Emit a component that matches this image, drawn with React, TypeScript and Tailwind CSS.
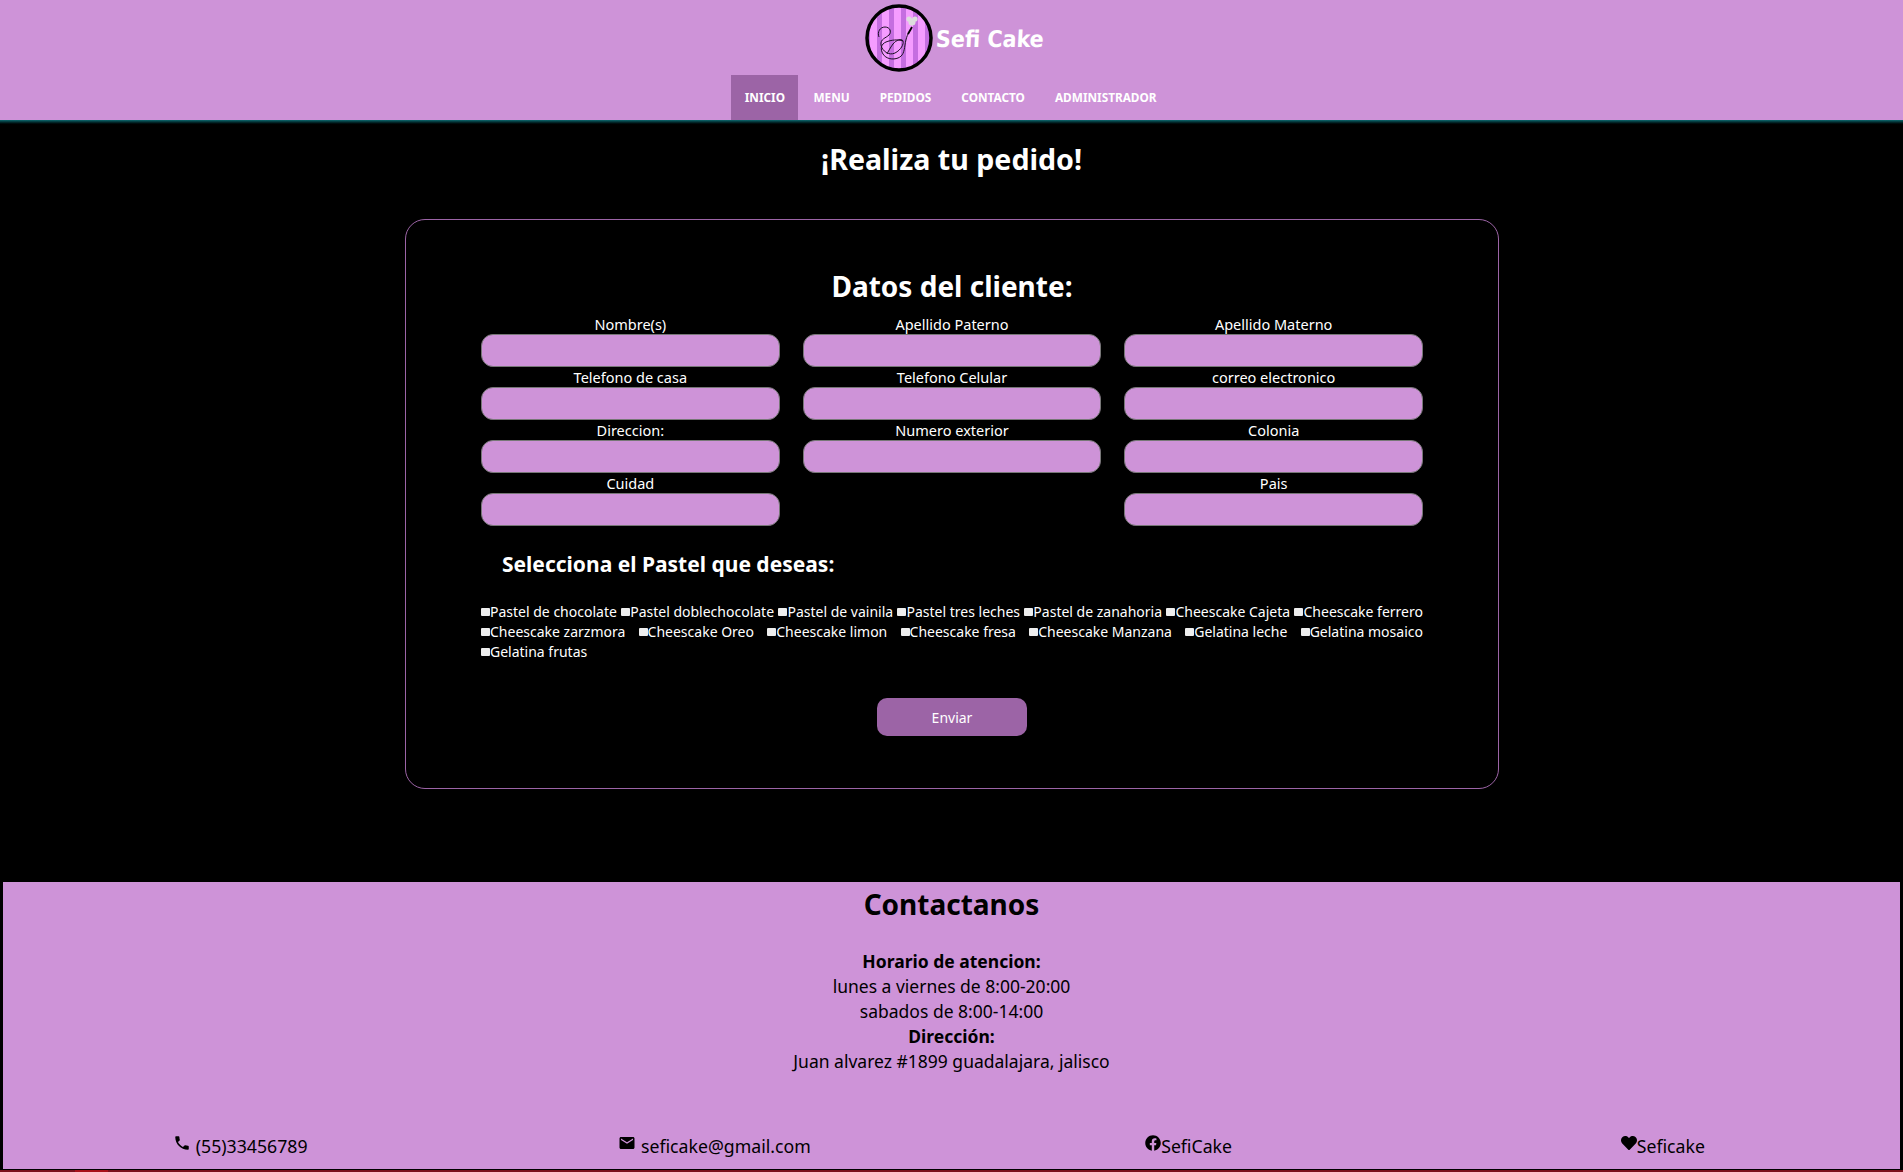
import { FaFacebook, FaHeart } from 'react-icons/fa'
import { MdLocalPhone, MdEmail } from 'react-icons/md'

const NAV = ['INICIO', 'MENU', 'PEDIDOS', 'CONTACTO', 'ADMINISTRADOR']

const FIELDS = [
  ['Nombre(s)', 'Apellido Paterno', 'Apellido Materno'],
  ['Telefono de casa', 'Telefono Celular', 'correo electronico'],
  ['Direccion:', 'Numero exterior', 'Colonia'],
  ['Cuidad', '', 'Pais'],
]

const CAKES = [
  ['Pastel de chocolate', 'Pastel doblechocolate', 'Pastel de vainila', 'Pastel tres leches', 'Pastel de zanahoria', 'Cheescake Cajeta', 'Cheescake ferrero'],
  ['Cheescake zarzmora', 'Cheescake Oreo', 'Cheescake limon', 'Cheescake fresa', 'Cheescake Manzana', 'Gelatina leche', 'Gelatina mosaico'],
  ['Gelatina frutas'],
]

const STRIPES = [6, 18, 30, 42, 54]

function Logo() {
  return (
    <svg width="70" height="70" viewBox="0 0 70 70">
      <defs>
        <clipPath id="disc">
          <circle cx="35" cy="35" r="31" />
        </clipPath>
      </defs>
      <g clipPath="url(#disc)">
        <rect width="70" height="70" fill="#c56ee0" />
        {STRIPES.map((x) => (
          <rect key={x} x={x} width="7" height="70" fill="#f59cff" />
        ))}
      </g>
      <circle cx="35" cy="35" r="32" fill="none" stroke="#000" strokeWidth="3.5" />
      <path d="M47 27c-3 2-5 8-6 15s-2 11-7 13-12 1-15-4-2-10 3-12 12-3 17-1M15 34c-2-5 1-10 6-10s7 5 4 8-9 4-8 10 8 11 14 8 9-9 8-12-7-1-10 3-5 8-6 10" fill="none" stroke="#1c0f24" strokeWidth="1" />
      <path d="M44 31l4-7" stroke="#000" strokeWidth="1.8" />
      <circle cx="48" cy="19" r="3.6" fill="#ddd" />
      <circle cx="45" cy="16" r="2.6" fill="#ddd" />
      <circle cx="51" cy="16" r="2.6" fill="#ddd" />
    </svg>
  )
}

export default function App() {
  return (
    <div className="font-['Noto_Sans',sans-serif] bg-black">
      <header className="bg-[#ce93d8] h-[120px] flex flex-col items-center">
        <div className="h-[75px] flex items-center gap-[2px] pl-[4px]">
          <Logo />
          <span className="mt-[3px] font-['DejaVu_Sans_Condensed','DejaVu_Sans',sans-serif] font-bold text-[23px] text-white -skew-x-3">Sefi Cake</span>
        </div>
        <nav className="flex h-[45px]">
          {NAV.map((item, i) => (
            <a key={item} className={`flex items-center pt-[1px] text-[11.8px] font-bold text-white ${i === 0 ? 'w-[67px] justify-center bg-[#9c64a6]' : 'px-[15px]'}`}>
              {item}
            </a>
          ))}
        </nav>
      </header>
      <div className="h-[5px] bg-gradient-to-b from-[#0f6a70] to-black" />

      <main className="h-[757px] flex flex-col items-center">
        <h1 className="mt-[14px] h-[40px] leading-[40px] text-[28.6px] font-bold text-white">¡Realiza tu pedido!</h1>
        <form className="mt-[40px] ml-[1px] w-[1094px] h-[570px] border border-[#9c64a6] rounded-[20px] px-[75px] pt-[46px]">
          <h2 className="text-center text-[28px] leading-[40px] font-bold text-white">Datos del cliente:</h2>
          <div className="mt-[9px] grid grid-cols-3 gap-x-[23px]">
            {FIELDS.flat().map((label, i) => (
              <div key={i} className="h-[53px] flex flex-col">
                {label && (
                  <>
                    <label className="h-[19px] leading-[18px] text-center text-[14.5px] text-white">{label}</label>
                    <input className="h-[33px] rounded-[12px] bg-[#ce93d8] border border-[#777]" />
                  </>
                )}
              </div>
            ))}
          </div>
          <h3 className="mt-[22px] ml-[21px] text-[21px] leading-[30px] font-bold text-white">Selecciona el Pastel que deseas:</h3>
          <div className="mt-[23px] text-[14px] leading-[20px] text-white">
            {CAKES.map((row, i) => (
              <div key={i} className={`flex ${row.length > 1 ? 'justify-between' : ''}`}>
                {row.map((name) => (
                  <span key={name} className="flex items-center whitespace-nowrap">
                    <span className="w-[9px] h-[8px] bg-[#eee] rounded-[1px]" />
                    {name}
                  </span>
                ))}
              </div>
            ))}
          </div>
          <div className="mt-[36px] flex justify-center">
            <button type="button" className="w-[150px] h-[38px] rounded-[10px] bg-[#9c64a6] text-white text-[14px]">Enviar</button>
          </div>
        </form>
      </main>

      <footer className="bg-[#ce93d8] border-x-[3px] border-b border-black h-[288px] text-black text-[17.5px] text-center">
        <h2 className="pt-[2px] text-[28px] leading-[40px] font-bold">Contactanos</h2>
        <div className="mt-[25px] leading-[25px]">
          <p className="font-bold">Horario de atencion:</p>
          <p>lunes a viernes de 8:00-20:00</p>
          <p>sabados de 8:00-14:00</p>
          <p className="font-bold">Dirección:</p>
          <p>Juan alvarez #1899 guadalajara, jalisco</p>
        </div>
        <div className="mt-[60px] grid grid-cols-4 text-[17.7px]">
          <p className="flex justify-center items-start leading-[25px]"><MdLocalPhone className="mr-[5px]" size={18} />(55)33456789</p>
          <p className="flex justify-center items-start leading-[25px]"><MdEmail className="mr-[5px]" size={18} />seficake@gmail.com</p>
          <p className="flex justify-center items-start leading-[25px]"><FaFacebook className="mt-[1px]" size={16} />SefiCake</p>
          <p className="flex justify-center items-start leading-[25px]"><FaHeart className="mt-[1px]" size={16} />Seficake</p>
        </div>
      </footer>
      <div className="h-[2px] bg-[#7a0f1c]">
        <div className="ml-[75px] w-[33px] h-[2px] bg-[#a80f18]" />
      </div>
    </div>
  )
}
